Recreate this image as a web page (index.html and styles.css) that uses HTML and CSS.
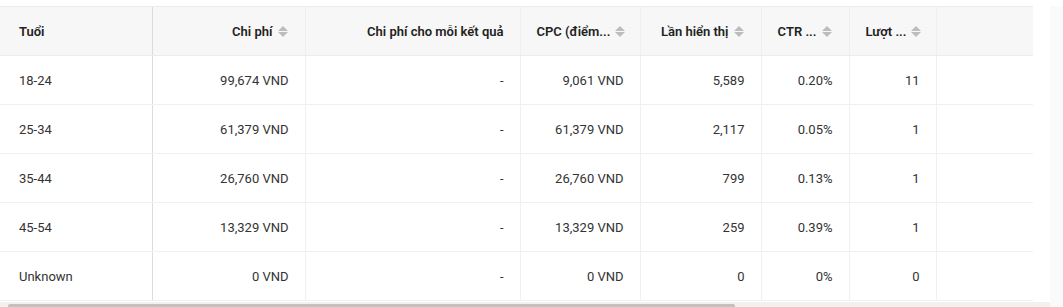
FILE: index.html
```html
<!DOCTYPE html>
<html lang="vi">
<head>
<meta charset="utf-8">
<link rel="stylesheet" href="styles.css">
</head>
<body>
<div class="page">
  <div class="wrap">
    <table class="grid">
      <colgroup>
        <col class="c1"><col class="c2"><col class="c3"><col class="c4"><col class="c5"><col class="c6"><col class="c7"><col class="c8">
      </colgroup>
      <thead>
        <tr>
          <th class="left first">Tuổi</th>
          <th class="sep"><span class="h">Chi phí<i class="sort"></i></span></th>
          <th><span class="h">Chi phí cho mỗi kết quả</span></th>
          <th><span class="h">CPC (điểm...<i class="sort"></i></span></th>
          <th><span class="h">Lần hiển thị<i class="sort"></i></span></th>
          <th><span class="h">CTR ...<i class="sort"></i></span></th>
          <th><span class="h">Lượt ...<i class="sort"></i></span></th>
          <th class="blank"></th>
        </tr>
      </thead>
      <tbody>
        <tr><td class="left first">18-24</td><td class="sep">99,674 VND</td><td>-</td><td>9,061 VND</td><td>5,589</td><td>0.20%</td><td>11</td><td class="blank"></td></tr>
        <tr><td class="left first">25-34</td><td class="sep">61,379 VND</td><td>-</td><td>61,379 VND</td><td>2,117</td><td>0.05%</td><td>1</td><td class="blank"></td></tr>
        <tr><td class="left first">35-44</td><td class="sep">26,760 VND</td><td>-</td><td>26,760 VND</td><td>799</td><td>0.13%</td><td>1</td><td class="blank"></td></tr>
        <tr><td class="left first">45-54</td><td class="sep">13,329 VND</td><td>-</td><td>13,329 VND</td><td>259</td><td>0.39%</td><td>1</td><td class="blank"></td></tr>
        <tr><td class="left first">Unknown</td><td class="sep">0 VND</td><td>-</td><td>0 VND</td><td>0</td><td>0%</td><td>0</td><td class="blank"></td></tr>
      </tbody>
    </table>
    <div class="hscroll"><div class="thumb"></div></div>
  </div>
  <div class="vscroll"></div>
</div>
</body>
</html>
```
FILE: styles.css
```css
html, body {
  margin: 0;
  padding: 0;
  background: #ffffff;
}
body {
  font-family: Roboto, "Noto Sans", "Liberation Sans", sans-serif;
  font-size: 13px;
  color: #333333;
}
.page {
  display: flex;
  width: 1063px;
  height: 307px;
  overflow: hidden;
  padding-top: 6px;
  box-sizing: border-box;
}
.wrap {
  width: 1050px;
  display: flex;
  flex-direction: column;
}
.grid {
  width: 1033px;
  border-collapse: collapse;
  table-layout: fixed;
}
.c1 { width: 152px; }
.c2 { width: 153px; }
.c3 { width: 215px; }
.c4 { width: 120px; }
.c5 { width: 121px; }
.c6 { width: 88px; }
.c7 { width: 87px; }
.c8 { width: 97px; }
th {
  height: 48px;
  background: #f7f7f7;
  border-top: 1px solid #ececec;
  border-bottom: 1px solid #ececec;
  border-left: 1px solid #efefef;
  padding: 0 16px;
  text-align: right;
  font-weight: 600;
  color: #222222;
  white-space: nowrap;
}
td {
  height: 48px;
  border-bottom: 1px solid #f0f0f0;
  border-left: 1px solid #f0f0f0;
  padding: 0 16px;
  text-align: right;
  white-space: nowrap;
  color: #333333;
}
.first { border-left: none; padding-left: 19px; }
.left { text-align: left; }
.sep { border-left: 1px solid #dcdcdc; }
.h {
  display: inline-flex;
  align-items: center;
  gap: 5px;
}
.sort {
  display: inline-flex;
  flex-direction: column;
  gap: 1px;
  margin-right: 1px;
}
.sort::before, .sort::after {
  content: "";
  display: block;
  width: 0;
  height: 0;
  border-left: 5px solid transparent;
  border-right: 5px solid transparent;
}
.sort::before { border-bottom: 5px solid #bdbdbd; }
.sort::after { border-top: 5px solid #bdbdbd; }
.hscroll {
  margin-top: 1px;
  height: 7px;
  width: 1050px;
  background: #f1f1f1;
  position: relative;
}
.thumb {
  position: absolute;
  left: 8px;
  top: 2px;
  width: 727px;
  height: 6px;
  background: #c1c1c1;
  border-radius: 2px;
}
.vscroll {
  width: 13px;
  background: #fafafa;
}
```
